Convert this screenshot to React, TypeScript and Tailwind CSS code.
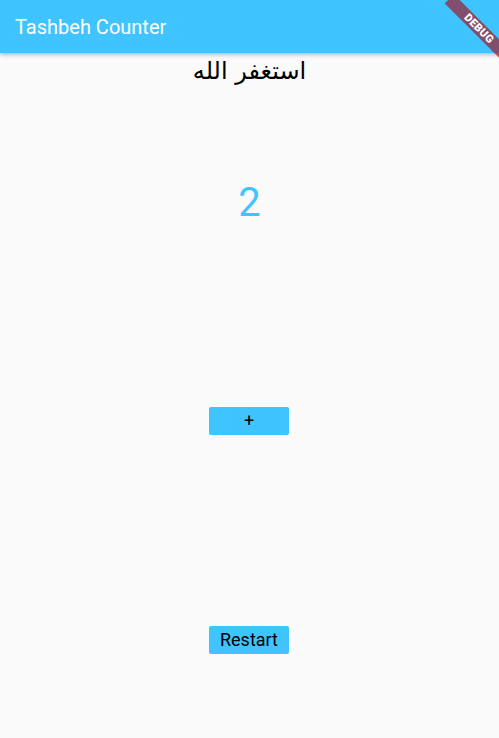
import { useState } from "react";

export default function App() {
  const [count, setCount] = useState(2);

  return (
    <main className="relative w-full h-[738px] overflow-hidden bg-[#fafafa] font-['Roboto',sans-serif]">
      {/* App bar */}
      <header className="relative z-10 h-[53px] bg-[#40c4ff] flex items-center px-[15px] shadow-[0_2px_4px_rgba(0,0,0,0.25)]">
        <h1 className="text-white text-[20px] leading-none">Tashbeh Counter</h1>
      </header>

      <div className="flex flex-col items-center">
        <p dir="rtl" className="h-[35px] leading-[36px] text-[24px] text-black font-['DejaVu_Sans',sans-serif]">
          استغفر الله
        </p>

        <p className="mt-[87px] h-[56px] leading-[56px] text-[40px] text-[#40c4ff]">{count}</p>

        <button
          onClick={() => setCount(count + 1)}
          className="mt-[176px] mr-[1px] w-[80px] h-[28px] rounded-[2px] bg-[#40c4ff] text-black text-[18px] leading-none flex items-center justify-center"
        >
          +
        </button>

        <button
          onClick={() => setCount(0)}
          className="mt-[191px] mr-[1px] w-[80px] h-[28px] rounded-[2px] bg-[#40c4ff] text-black text-[18px] leading-none flex items-center justify-center"
        >
          Restart
        </button>
      </div>

      {/* Debug banner */}
      <div className="absolute z-20 top-[22px] right-[-22px] w-[84px] h-[13px] rotate-45 bg-[rgba(160,24,40,0.68)] flex items-center justify-center">
        <span className="text-white text-[11px] font-black leading-none tracking-[0.3px] font-['Roboto',sans-serif]">DEBUG</span>
      </div>
    </main>
  );
}
